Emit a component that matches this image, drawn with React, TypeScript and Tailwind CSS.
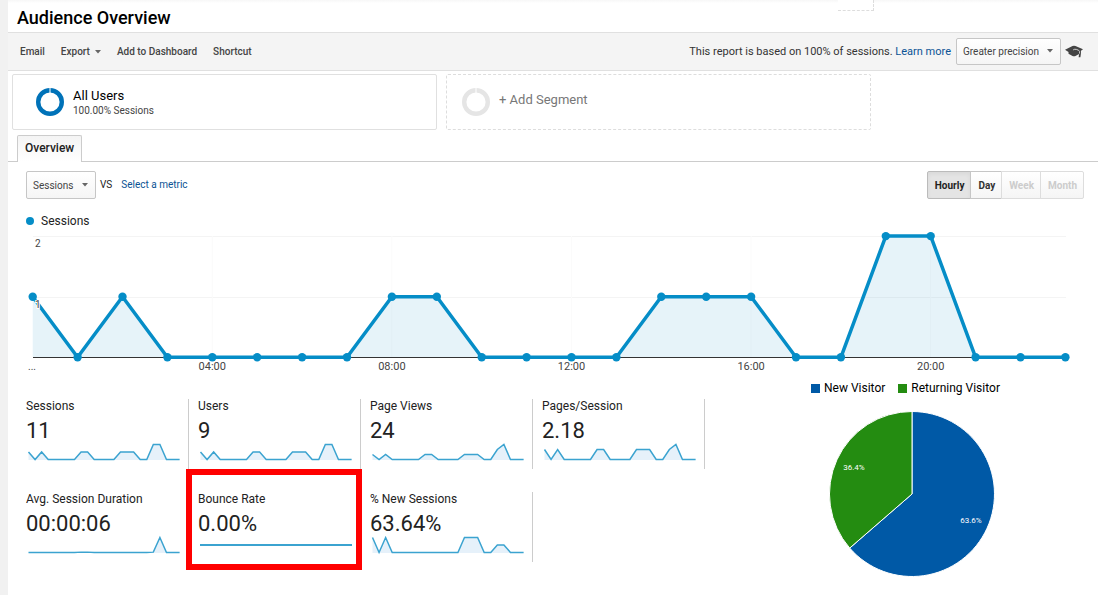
import { useState } from 'react';

interface Metric {
  label: string;
  value: string;
  data: number[];
  highlighted?: boolean;
}

const sessions = [1, 0, 1, 0, 0, 0, 0, 0, 1, 1, 0, 0, 0, 0, 1, 1, 1, 0, 0, 2, 2, 0, 0, 0];

const metrics: Metric[] = [
  { label: 'Sessions', value: '11', data: sessions },
  { label: 'Users', value: '9', data: sessions },
  {
    label: 'Page Views',
    value: '24',
    data: [1, 0, 1, 0, 0, 0, 0, 0, 1, 1, 0, 0, 0, 0, 1, 1, 1, 0, 0, 2, 3, 0, 0, 0]
  },
  {
    label: 'Pages/Session',
    value: '2.18',
    data: [2, 0, 2, 0, 0, 0, 0, 0, 2, 2, 0, 0, 0, 0, 2, 2, 2, 0, 0, 2, 3, 0, 0, 0]
  },
  {
    label: 'Avg. Session Duration',
    value: '00:00:06',
    data: [0, 0, 0, 0, 0, 0, 0, 0, 1, 1, 0, 0, 0, 0, 0, 0, 0, 0, 0, 1, 40, 0, 0, 0]
  },
  { label: 'Bounce Rate', value: '0.00%', data: [], highlighted: true },
  {
    label: '% New Sessions',
    value: '63.64%',
    data: [2, 0, 2, 0, 0, 0, 0, 0, 0, 0, 0, 0, 0, 0, 2, 2, 2, 0, 0, 1, 1, 0, 0, 0]
  }
];

const ranges = ['Hourly', 'Day', 'Week', 'Month'];

const hourLabels = [
  { hour: 4, text: '04:00' },
  { hour: 8, text: '08:00' },
  { hour: 12, text: '12:00' },
  { hour: 16, text: '16:00' },
  { hour: 20, text: '20:00' }
];

function Caret({ className = '' }: { className?: string }) {
  return (
    <svg viewBox="0 0 6 4" className={`h-1 w-1.5 fill-[#666] ${className}`} aria-hidden="true">
      <path d="M0 0h6L3 3.5z" />
    </svg>
  );
}

function Ring({ className }: { className: string }) {
  return (
    <svg viewBox="0 0 28 28" className={`size-7 shrink-0 fill-none ${className}`} aria-hidden="true">
      <circle cx="14" cy="14" r="11.8" strokeWidth="4.4" />
      <path d="M14 0v5" stroke="#fff" strokeWidth="1" />
    </svg>
  );
}

function CapIcon() {
  return (
    <svg viewBox="0 0 18 13" className="h-[13px] w-[18px]" aria-hidden="true">
      <path d="M0 4.8 7.5 1Q9 .4 10.5 1L18 4.3 16 5.8V8l-.6 4.2h-1.8l.5-3.2-3.6 1.900Q9 11.600 7.500 10.900L3.500 8.800V6.900z" fill="#444" />
      <path d="M8.200 4.900Q9.500 3.900 11.400 4.400Q14.200 5.200 14.600 6.400V8.600" fill="none" stroke="#f4f4f4" strokeWidth="0.8" />
    </svg>
  );
}

function SessionsChart() {
  const x = (i: number) => 6.7 + i * 44.9;
  const y = (v: number) => 128.3 - v * 60.6;
  const line = sessions.map((v, i) => `${x(i)},${y(v)}`).join(' ');

  return (
    <svg viewBox="0 0 1058 146" className="block w-full" role="img" aria-label="Sessions by hour">
      <path d="M7 7.5H1040M7 68.5H1040" stroke="#f4f4f4" />
      {hourLabels.map(({ hour }) => (
        <path key={hour} d={`M${x(hour)} 7V128`} stroke="#fbfbfb" />
      ))}
      <polygon points={`${x(0)},128 ${line} ${x(23)},128`} fill="#058dc7" fillOpacity="0.1" />
      <path d="M7 128.5H1040" stroke="#333" />
      <polyline points={line} fill="none" stroke="#058dc7" strokeWidth="3.5" strokeLinejoin="round" />
      {sessions.map((v, i) => (
        <circle key={i} cx={x(i)} cy={y(v)} r="4.2" fill="#058dc7" />
      ))}
      <g fontSize="10" fill="#444">
        <text x="9" y="18">2</text>
        <text x="9" y="79" stroke="#fff" strokeWidth="2" paintOrder="stroke">1</text>
        <text x="2" y="141">...</text>
        {hourLabels.map(({ hour, text }) => (
          <text key={hour} x={x(hour)} y="141" fontSize="11" textAnchor="middle">{text}</text>
        ))}
      </g>
    </svg>
  );
}

function Sparkline({ data }: { data: number[] }) {
  if (data.length === 0) {
    return (
      <svg viewBox="0 0 154 20" className="block w-full" aria-hidden="true">
        <path d="M2 10h152" stroke="#3ba3d0" strokeWidth="2" />
      </svg>
    );
  }

  const max = Math.max(...data);
  const line = data.map((v, i) => `${2.5 + i * 6.57},${17.5 - (v / max) * 15}`).join(' ');

  return (
    <svg viewBox="0 0 154 20" className="block w-full" aria-hidden="true">
      <polygon points={`2.5,18 ${line} 153.6,18`} fill="#e6f1fa" />
      <polyline points={line} fill="none" stroke="#3ba3d0" strokeWidth="1.5" />
    </svg>
  );
}

function MetricCard({ metric }: { metric: Metric }) {
  return (
    <div className="relative pr-[9px]">
      <div className="h-[70px] border-r border-[#ccc] pr-2">
        <div className="text-xs leading-[14px] text-[#222]">{metric.label}</div>
        <div className="pt-1.5 text-[22px] leading-[23px] text-[#222]">{metric.value}</div>
        <Sparkline data={metric.data} />
      </div>
      {metric.highlighted && (
        <div className="absolute -top-[23px] right-2 -bottom-2 -left-3 border-6 border-[#ff0000]" />
      )}
    </div>
  );
}

function VisitorPie() {
  return (
    <svg viewBox="0 0 166 166" className="mt-4 ml-[18px] block size-[166px]" role="img" aria-label="New and returning visitors">
      <g stroke="#fff" strokeWidth="1">
        <path d="M83 83V0.5A82.5 82.5 0 1 1 20.7 137.1Z" fill="#0059a6" />
        <path d="M83 83 20.7 137.1A82.5 82.5 0 0 1 83 0.5Z" fill="#248c11" />
      </g>
      <g fontSize="8" fill="#fff" textAnchor="middle">
        <text x="25" y="59">36.4%</text>
        <text x="142" y="112">63.6%</text>
      </g>
    </svg>
  );
}

export default function App() {
  const [range, setRange] = useState('Hourly');

  return (
    <div className="flex min-h-screen bg-[#f1f1f1] pl-2 font-[Roboto,sans-serif] text-[#222]">
      <main className="min-w-0 flex-1 bg-white">
        {/* Title */}
        <header className="flex h-8 items-start justify-between bg-linear-to-b from-[#f7f7f7] to-white to-10%">
          <h1 className="pt-1.5 pl-[9px] text-lg leading-6 font-medium text-black">Audience Overview</h1>
          <div className="mr-56 h-[11px] w-9 border-r border-b border-dashed border-[#ddd] bg-white" />
        </header>

        {/* Toolbar */}
        <div className="flex h-[39px] items-center justify-between border-y border-[#e0e0e0] bg-[#f4f4f4] pr-[15px] pl-3">
          <div className="flex items-center gap-4 text-[10px] font-medium text-[#444]">
            <button>Email</button>
            <button className="flex items-center gap-[5px]">
              Export
              <Caret />
            </button>
            <button>Add to Dashboard</button>
            <button>Shortcut</button>
          </div>
          <div className="flex items-center text-[11px] text-[#333]">
            <span className="pt-px">
              This report is based on 100% of sessions. <a href="#" className="text-[#0b5394]">Learn more</a>
            </span>
            <div className="relative ml-[5px]">
              <select
                aria-label="Precision"
                className="h-[27px] w-[105px] appearance-none rounded-xs border border-[#c6c6c6] bg-linear-to-b from-white to-[#f5f5f5] pl-1.5 text-[10px] text-[#444]"
              >
                <option>Greater precision</option>
                <option>Faster response</option>
              </select>
              <Caret className="pointer-events-none absolute top-[11px] right-2" />
            </div>
            <button aria-label="Education" className="ml-1">
              <CapIcon />
            </button>
          </div>
        </div>

        {/* Segments */}
        <div className="grid grid-cols-2 gap-[9px] pt-[3px] pr-[227px] pl-1">
          <div className="flex h-14 items-center gap-[9px] rounded-xs border border-[#e0e0e0] pl-[23px]">
            <Ring className="stroke-[#0072b8]" />
            <div className="pt-0.5">
              <div className="text-[13px] leading-4 text-black">All Users</div>
              <div className="text-[10px] leading-[14px] text-[#444]">100.00% Sessions</div>
            </div>
          </div>
          <button className="flex h-14 items-center gap-[9px] rounded-xs border border-dashed border-[#ddd] pl-[15px] text-[13px] text-[#777]">
            <Ring className="stroke-[#e5e5e5]" />
            <span className="pb-1">+ Add Segment</span>
          </button>
        </div>

        {/* Tabs */}
        <div className="mt-[5px] flex border-b border-[#ccc] pl-[9px]">
          <button className="-mb-px h-[27px] rounded-t-xs border border-b-0 border-[#ccc] bg-linear-to-b from-[#f4f4f4] to-white px-[7px] pb-0.5 text-xs font-medium text-[#222]">
            Overview
          </button>
        </div>

        <div className="pt-[9px] pr-3.5 pl-[18px]">
          {/* Chart controls */}
          <div className="flex items-center justify-between">
            <div className="flex items-center text-[10px]">
              <div className="relative">
                <select
                  aria-label="Metric"
                  className="h-7 w-[70px] appearance-none rounded-xs border border-[#c6c6c6] bg-linear-to-b from-white to-[#f5f5f5] pl-1.5 text-[#444]"
                >
                  <option>Sessions</option>
                  <option>Users</option>
                </select>
                <Caret className="pointer-events-none absolute top-3 right-2" />
              </div>
              <span className="ml-1 pb-px">VS</span>
              <a href="#" className="ml-[9px] pb-px text-[#0b5394]">Select a metric</a>
            </div>
            <div className="flex text-[10px] font-bold">
              {ranges.map((name) => (
                <button
                  key={name}
                  onClick={() => setRange(name)}
                  disabled={name === 'Week' || name === 'Month'}
                  className={`-ml-px h-7 border pr-1.5 pl-[7px] first:rounded-l-xs last:rounded-r-xs disabled:border-[#ddd] disabled:bg-[#f3f3f3] disabled:text-[#ccc] ${
                    range === name
                      ? 'border-[#bbb] bg-[#e4e4e4] text-[#222] inset-shadow-sm'
                      : 'border-[#c6c6c6] bg-linear-to-b from-white to-[#f5f5f5] text-[#333]'
                  }`}
                >
                  {name}
                </button>
              ))}
            </div>
          </div>

          {/* Sessions over time */}
          <div className="mt-3.5 flex h-4 items-center gap-[7px] text-xs text-[#222]">
            <span className="size-2 rounded-full bg-[#058dc7]" />
            Sessions
          </div>
          <SessionsChart />

          {/* Metrics and visitors */}
          <div className="grid grid-cols-[688fr_370fr]">
            <div className="mt-6 grid grid-cols-4 content-start gap-y-[23px]">
              {metrics.map((metric) => (
                <MetricCard key={metric.label} metric={metric} />
              ))}
            </div>
            <div className="mt-1.5 pl-[97px]">
              <div className="flex gap-[13px] text-xs leading-[14px] whitespace-nowrap text-black">
                <span className="flex items-center gap-1">
                  <i className="size-[9px] bg-[#0059a6]" />
                  New Visitor
                </span>
                <span className="flex items-center gap-1">
                  <i className="size-[9px] bg-[#248c11]" />
                  Returning Visitor
                </span>
              </div>
              <VisitorPie />
            </div>
          </div>
        </div>
      </main>
    </div>
  );
}
